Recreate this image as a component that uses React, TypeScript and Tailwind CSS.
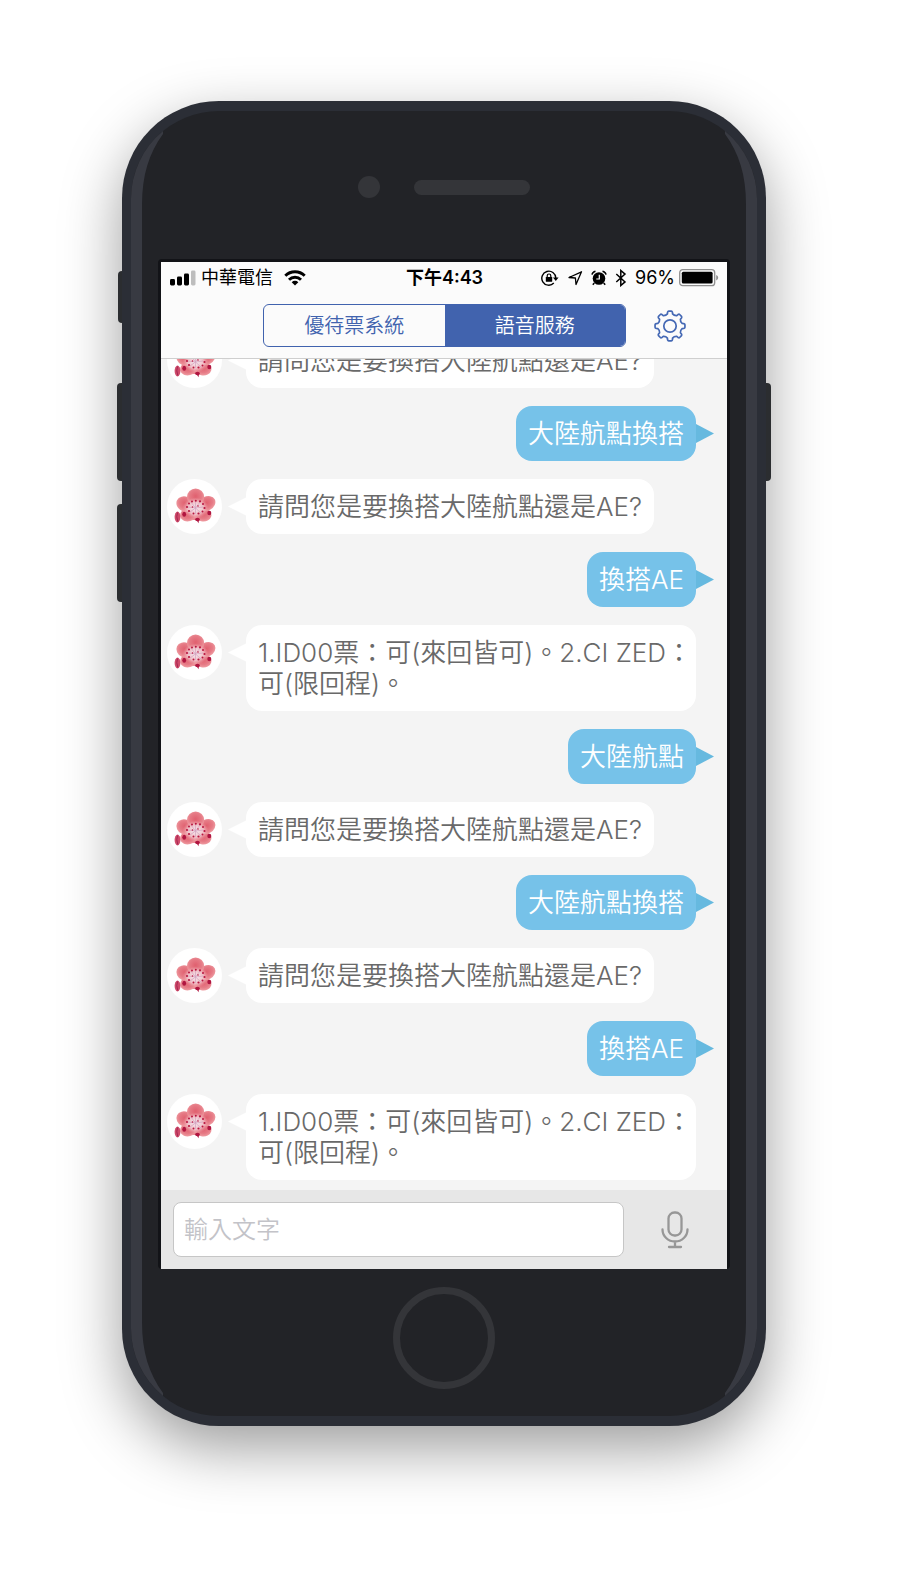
import { useId } from "react";

type Message = { from: "bot" | "me"; text: string };

const ASK = "請問您是要換搭大陸航點還是AE?";
const ANSWER = "1.ID00票：可(來回皆可)。2.CI ZED：\n可(限回程)。";

const messages: Message[] = [
  { from: "bot", text: ASK },
  { from: "me", text: "大陸航點換搭" },
  { from: "bot", text: ASK },
  { from: "me", text: "換搭AE" },
  { from: "bot", text: ANSWER },
  { from: "me", text: "大陸航點" },
  { from: "bot", text: ASK },
  { from: "me", text: "大陸航點換搭" },
  { from: "bot", text: ASK },
  { from: "me", text: "換搭AE" },
  { from: "bot", text: ANSWER },
];

/* Plum blossom used as the assistant's avatar */
function Blossom() {
  const id = useId();
  const petal = `${id}p`;
  const heart = `${id}h`;
  return (
    <svg viewBox="0 0 55 55" className="size-full" aria-hidden="true">
      <defs>
        <radialGradient id={petal} cx="50%" cy="45%" r="58%">
          <stop offset="0" stopColor="#e0606f" />
          <stop offset="0.6" stopColor="#e67b86" />
          <stop offset="1" stopColor="#f0a0a5" />
        </radialGradient>
        <radialGradient id={heart}>
          <stop offset="0" stopColor="#f8eef4" />
          <stop offset="0.6" stopColor="#f3ccd3" stopOpacity="0.85" />
          <stop offset="1" stopColor="#ee9aa3" stopOpacity="0" />
        </radialGradient>
      </defs>
      <path d="M20 18 36 18 42 31 34 41 22 41 15 31z" fill="#ea8790" />
      <g fill={`url(#${petal})`}>
        <ellipse cx="21.500" cy="35.500" rx="8.500" ry="6.800" transform="rotate(-15 21.500 35.500)" />
        <ellipse cx="35.500" cy="35.500" rx="9" ry="6.800" transform="rotate(12 35.500 35.500)" />
        <ellipse cx="17.800" cy="25" rx="8.600" ry="7.400" transform="rotate(25 17.800 25)" />
        <ellipse cx="39.800" cy="24.500" rx="9" ry="7" transform="rotate(-28 39.800 24.500)" />
        <ellipse cx="28.600" cy="18" rx="8.600" ry="8.600" />
      </g>
      <ellipse cx="28.500" cy="29" rx="13" ry="10.500" fill={`url(#${heart})`} />
      <path
        d="M28.500 29 24 23M28.500 29V22M28.500 29 33 23M28.500 29 36 28M28.500 29 34 34M28.500 29V35M28.500 29 23 33M28.500 29 21 28"
        stroke="#d3a0bd"
        strokeWidth="0.700"
        fill="none"
      />
      <g fill="#b8163f">
        <circle cx="20" cy="28" r="1.100" />
        <circle cx="22" cy="24.500" r="1" />
        <circle cx="25" cy="22.500" r="1" />
        <circle cx="28.800" cy="21.800" r="1" />
        <circle cx="33" cy="22.300" r="1.100" />
        <circle cx="36" cy="25" r="1" />
        <circle cx="37.500" cy="29" r="1.100" />
        <circle cx="35.500" cy="32.500" r="1" />
        <circle cx="31.500" cy="34.500" r="1.100" />
        <circle cx="26.500" cy="34.500" r="1" />
        <circle cx="22" cy="32" r="1.100" />
        <circle cx="31" cy="27" r="0.800" />
        <circle cx="25.500" cy="28" r="0.800" />
      </g>
      <g fill="#b01540">
        <ellipse cx="17.200" cy="35.300" rx="1.900" ry="2.500" />
        <ellipse cx="42.300" cy="34" rx="2" ry="2.300" />
        <ellipse cx="30.500" cy="40.500" rx="2.400" ry="1.700" />
        <path d="M29.500 41l2 3.200 .5-3.400z" />
      </g>
      <ellipse cx="10.500" cy="38" rx="2.900" ry="5.400" fill="#cf4b6b" />
      <path d="M10.500 33.500q-1.500 4 .3 9" stroke="#a32650" strokeWidth="1" fill="none" />
    </svg>
  );
}

function SignalIcon() {
  return (
    <svg width="26" height="16" viewBox="0 0 26 16" aria-hidden="true">
      <rect x="0" y="9" width="5" height="6.500" rx="1.400" />
      <rect x="7" y="6.500" width="5" height="9" rx="1.400" />
      <rect x="14" y="3.500" width="5" height="12" rx="1.400" />
      <rect x="21" y="0.500" width="4.500" height="15" rx="1.400" fill="#bdbdbd" />
    </svg>
  );
}

function WifiIcon() {
  return (
    <svg width="22" height="16" viewBox="0 0 22 16" aria-hidden="true">
      <g fill="none" stroke="#000" strokeWidth="2.900">
        <path d="M1.300 5.800a13.700 13.700 0 0 1 19.400 0" />
        <path d="M5 9.700a8.500 8.500 0 0 1 12 0" />
      </g>
      <path d="M7.700 12.200a4.700 4.700 0 0 1 6.600 0L11 15.600z" />
    </svg>
  );
}

function RotationLockIcon() {
  return (
    <svg width="18" height="16" viewBox="0 0 18 16" aria-hidden="true">
      <path d="M12.800 13.100A7 7 0 1 1 14.800 8" fill="none" stroke="#000" strokeWidth="1.400" />
      <path d="M12 7.500h5.600L14.800 11z" />
      <rect x="4.800" y="7" width="6.400" height="4.800" rx="0.600" />
      <path d="M6.200 7.500V5.800a1.800 1.800 0 0 1 3.600 0v1.700" fill="none" stroke="#000" strokeWidth="1.200" />
    </svg>
  );
}

function LocationIcon() {
  return (
    <svg width="16" height="16" viewBox="0 0 16 16" aria-hidden="true">
      <path d="M2 7.500 14.500 1.800 9 14.500 8.400 8z" fill="none" stroke="#000" strokeWidth="1.300" strokeLinejoin="round" />
    </svg>
  );
}

function AlarmIcon() {
  return (
    <svg width="16" height="16" viewBox="0 0 16 16" aria-hidden="true">
      <circle cx="8" cy="8.500" r="6.300" />
      <path d="M1 4.700Q1.500 1.800 4.500 1.200M15 4.700Q14.500 1.800 11.500 1.200M3.300 13 1.800 14.800M12.700 13l1.500 1.800" stroke="#000" strokeWidth="1.500" fill="none" />
      <path d="M8.300 4.800v4.200H5.300" stroke="#fff" strokeWidth="1.200" fill="none" />
    </svg>
  );
}

function BluetoothIcon() {
  return (
    <svg width="12" height="18" viewBox="0 0 12 18" aria-hidden="true">
      <path d="M1.300 5 10 12.900 5.800 16.500V1.500L10 5.100 1.300 13" fill="none" stroke="#000" strokeWidth="1.500" />
    </svg>
  );
}

function BatteryIcon() {
  return (
    <svg width="40" height="18" viewBox="0 0 40 18" aria-hidden="true">
      <rect x="0.700" y="0.700" width="35" height="16" rx="3" fill="none" stroke="#909090" strokeWidth="1.300" />
      <rect x="2.800" y="2.800" width="30.800" height="11.800" rx="1.500" />
      <path d="M37.200 6q2 .8 2 2.700t-2 2.700z" fill="#909090" />
    </svg>
  );
}

function gearPath() {
  const parts: string[] = [];
  const at = (r: number, deg: number) => {
    const a = ((deg - 90) * Math.PI) / 180;
    return `${(16 + r * Math.cos(a)).toFixed(2)} ${(16 + r * Math.sin(a)).toFixed(2)}`;
  };
  for (let i = 0; i < 8; i++) {
    const c = i * 45;
    parts.push(`${i === 0 ? "M" : "L"}${at(12.4, c - 12)}`);
    parts.push(`L${at(14, c - 10)}`);
    parts.push(`Q${at(15.1, c - 8)} ${at(15, c - 5)}`);
    parts.push(`L${at(15, c + 5)}`);
    parts.push(`Q${at(15.1, c + 8)} ${at(14, c + 10)}`);
    parts.push(`L${at(12.4, c + 12)}`);
    parts.push(`Q${at(11, c + 22.5)} ${at(12.4, c + 33)}`);
  }
  return parts.join("") + "Z";
}

function GearIcon() {
  return (
    <svg width="32" height="32" viewBox="0 0 32 32" fill="none" stroke="#4468b4" strokeWidth="1.700" strokeLinejoin="round" aria-hidden="true">
      <path d={gearPath()} />
      <circle cx="16" cy="16" r="6.200" />
    </svg>
  );
}

function MicIcon() {
  return (
    <svg width="28" height="38" viewBox="0 0 28 38" fill="none" stroke="#979797" strokeWidth="2.300" strokeLinecap="round" aria-hidden="true">
      <rect x="7.500" y="1.500" width="13" height="23" rx="6" />
      <path d="M1.500 18.500a12.500 12 0 0 0 25 0M14 30.500v5.500M8 36h12" />
    </svg>
  );
}

function CornerGlint({ className }: { className?: string }) {
  return (
    <svg width="32" height="100" viewBox="0 0 32 100" className={className} aria-hidden="true">
      <path d="M0 100V88A88 88 0 0 1 32 20V23C18 42 11 64 11 94V100Z" fill="#383a42" />
    </svg>
  );
}

/* Light strip that runs down one side of the casing */
function EdgeGlint({ side }: { side: "left" | "right" }) {
  return (
    <div
      className={
        side === "left"
          ? "absolute inset-y-0 left-0 flex w-8 flex-col"
          : "absolute inset-y-0 right-0 flex w-8 -scale-x-100 flex-col"
      }
    >
      <CornerGlint />
      <div className="w-[11px] flex-1 bg-[#383a42]" />
      <CornerGlint className="-scale-y-100" />
    </div>
  );
}

function ChatRow({ message }: { message: Message }) {
  if (message.from === "me") {
    return (
      <li className="flex justify-end">
        <p className="relative rounded-2xl bg-[#76c2e9] px-3 py-3 text-white">
          {message.text}
          <svg width="18" height="20" viewBox="0 0 18 20" className="absolute top-[18px] -right-[18px]" aria-hidden="true">
            <path d="M0 0 18 9.500 0 19z" fill="#66b9df" />
          </svg>
        </p>
      </li>
    );
  }
  return (
    <li className="flex items-start gap-6">
      <div className="size-[55px] shrink-0 rounded-full bg-white">
        <Blossom />
      </div>
      <p className="relative min-w-0 rounded-2xl bg-white px-3 py-3 whitespace-pre text-[#696969]">
        {message.text}
        <svg width="19" height="20" viewBox="0 0 19 20" className="absolute top-[18px] -left-[18px]" aria-hidden="true">
          <path d="M19 0 0 9.500 19 19z" fill="#fff" />
        </svg>
      </p>
    </li>
  );
}

export default function App() {
  return (
    <main
      lang="zh-TW"
      className="min-h-screen bg-white pt-[101px] pr-[134px] pb-36 pl-[122px] font-['Inter','Noto_Sans_CJK_TC',sans-serif]"
    >
      <div className="relative rounded-[97px] bg-[#2b2e36] px-[9px] py-[10px] shadow-[0_22px_60px_rgba(0,0,0,0.39)]">
        <span className="absolute top-[170px] -left-1 h-[52px] w-1 rounded-l-sm bg-[#2b2d30]" />
        <span className="absolute top-[282px] -left-[5px] h-[98px] w-[5px] rounded-l-sm bg-[#2b2d30]" />
        <span className="absolute top-[403px] -left-[5px] h-[98px] w-[5px] rounded-l-sm bg-[#2b2d30]" />
        <span className="absolute top-[282px] -right-[5px] h-[98px] w-[5px] rounded-r-sm bg-[#2b2d30]" />

        <div className="relative rounded-[88px] bg-[#222327] px-[27px]">
          <EdgeGlint side="left" />
          <EdgeGlint side="right" />

          <div className="flex h-[148px] justify-center gap-[34px] pt-[65px]">
            <span className="size-[22px] rounded-full bg-[#343539]" />
            <span className="mt-1 h-[15px] w-[116px] rounded-full bg-[#343539]" />
          </div>

          <div className="relative rounded-[4px] bg-[#121317] px-[3px] pt-[3px]">
            <header className="border-b border-[#cfcfcf] bg-[#fbfbfb]">
              <div className="grid grid-cols-[1fr_auto_1fr] items-center pt-[2px] pr-2 pl-[9px] text-[18px] leading-[28px] text-black">
                <div className="flex items-center gap-[5px]">
                  <SignalIcon />
                  <span>中華電信</span>
                  <span className="pl-[6px]">
                    <WifiIcon />
                  </span>
                </div>
                <span className="font-semibold">下午4:43</span>
                <div className="flex items-center justify-end gap-2">
                  <RotationLockIcon />
                  <LocationIcon />
                  <AlarmIcon />
                  <BluetoothIcon />
                  <div className="flex items-center gap-1">
                    <span>96%</span>
                    <BatteryIcon />
                  </div>
                </div>
              </div>
              <div className="flex items-center pt-3 pr-[41px] pb-[11px] pl-[102px]">
                <nav className="flex h-[43px] flex-1 overflow-hidden rounded-[6px] border border-[#4163ae] text-[20px] font-[350]">
                  <button type="button" className="flex-1 text-[#4163ae]">
                    優待票系統
                  </button>
                  <button type="button" className="flex-1 bg-[#4163ae] text-white">
                    語音服務
                  </button>
                </nav>
                <button type="button" aria-label="設定" className="ml-7">
                  <GearIcon />
                </button>
              </div>
            </header>

            <ul className="flex h-[831px] flex-col justify-end gap-[18px] overflow-hidden bg-[#f4f4f4] pr-[31px] pb-[10px] pl-[6px] text-[26px] leading-[31px] font-[350]">
              {messages.map((m, i) => (
                <ChatRow key={i} message={m} />
              ))}
            </ul>

            <form className="flex items-center bg-[#e7e7e7] py-3 pr-[38px] pl-3" onSubmit={(e) => e.preventDefault()}>
              <input
                type="text"
                aria-label="輸入文字"
                placeholder="輸入文字"
                className="h-[55px] min-w-0 flex-1 rounded-lg border border-[#c6c6c6] bg-white px-[10px] text-[24px] font-[350] text-[#696969] outline-none placeholder:text-[#c3c3c8]"
              />
              <button type="button" aria-label="語音輸入" className="ml-[37px]">
                <MicIcon />
              </button>
            </form>
          </div>

          <div className="flex h-[147px] justify-center pt-[18px]">
            <button
              type="button"
              aria-label="Home"
              className="size-[102px] rounded-full border-[7px] border-[#343539]"
            />
          </div>
        </div>
      </div>
    </main>
  );
}
